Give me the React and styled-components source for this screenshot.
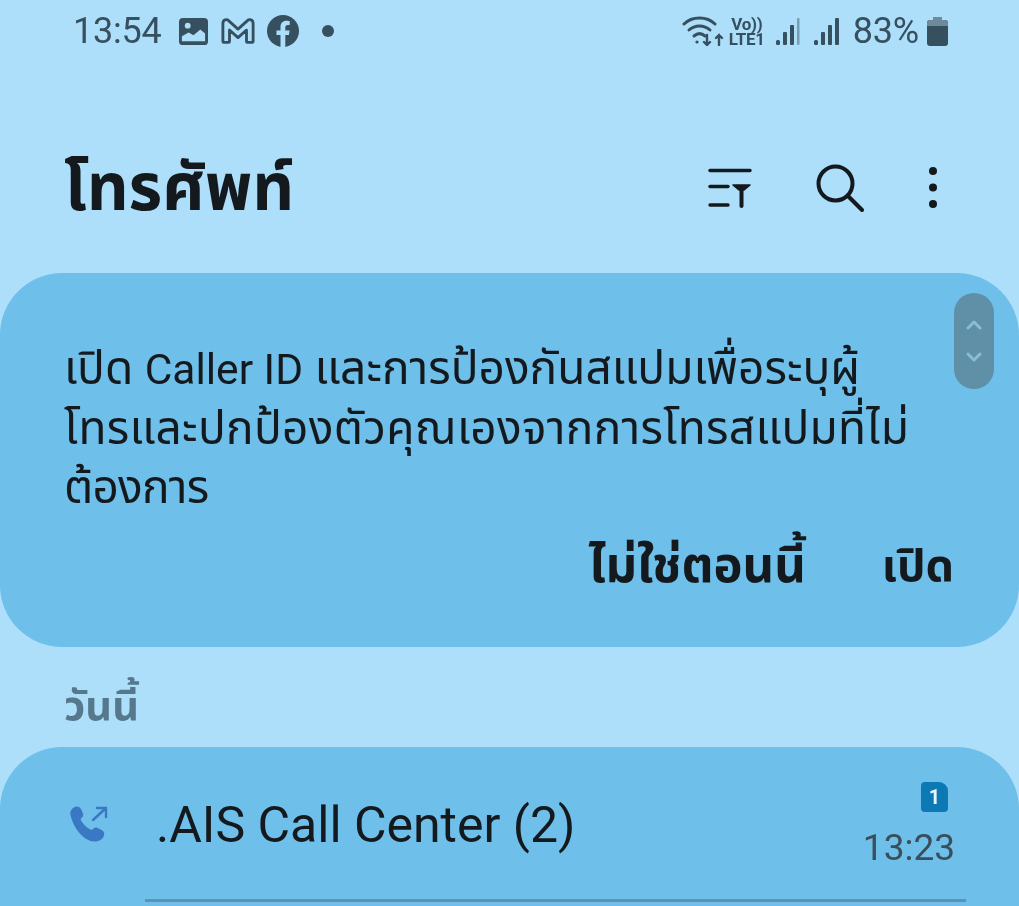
import React from "react"
import styled, { createGlobalStyle } from "styled-components"

const GlobalStyle = createGlobalStyle`
  html, body {
    margin: 0;
    padding: 0;
    background: #addffb;
    font-family: Roboto, "Noto Sans", "Noto Sans Thai", sans-serif;
  }
  body {
    height: 906px;
    overflow: hidden;
  }
`

const Page = styled.div`
  position: relative;
  width: 1019px;
  height: 906px;
  overflow: hidden;
  background: #addffb;
  filter: blur(0.7px);
`

const StatusBar = styled.div`
  display: flex;
  justify-content: space-between;
  align-items: center;
  height: 62px;
  padding: 0 71px 0 73px;
  color: #37505f;
`

const StatusGroup = styled.div`
  display: flex;
  align-items: center;
`

const StatusSlot = styled.div`
  display: flex;
  align-items: center;
  margin-left: ${(p) => p.$left || 0}px;
`

const StatusText = styled.span`
  font-size: 36px;
  line-height: 62px;
  letter-spacing: -0.2px;
`

const VoLte = styled.div`
  display: flex;
  flex-direction: column;
  align-items: center;
  font-size: 17px;
  font-weight: 700;
  line-height: 15px;
  letter-spacing: -0.3px;
  margin-top: 2px;
`

const Header = styled.div`
  display: flex;
  justify-content: space-between;
  align-items: center;
  height: 170px;
  padding: 41px 81px 0 64px;
`

const Title = styled.h1`
  margin: 4px 0 0;
  font-size: 65px;
  font-weight: 700;
  color: #14191d;
`

const Actions = styled.div`
  display: flex;
  align-items: center;
  gap: 64px;
`

const Banner = styled.section`
  height: 374px;
  box-sizing: border-box;
  padding: 66px 65px 0 64px;
  background: #6ebfea;
  border-radius: 62px;
  color: #14191d;
`

const BannerLine = styled.div`
  font-size: 46px;
  line-height: 59.5px;
  height: 59.5px;
  white-space: nowrap;
  letter-spacing: ${(p) => p.$tracking || 0}px;
`

const Latin = styled.span`
  font-size: 42.5px;
`

const BannerButtons = styled.div`
  display: flex;
  justify-content: flex-end;
  align-items: center;
  gap: 76px;
  margin-top: 21px;
`

const BannerButton = styled.span`
  font-size: ${(p) => p.$size || 49}px;
  font-weight: 700;
  line-height: 54px;
`

const ScrollThumb = styled.div`
  position: absolute;
  left: 954px;
  top: 293px;
  width: 40px;
  height: 96px;
  border-radius: 20px;
  background: #5f90a8;
  display: flex;
  flex-direction: column;
  align-items: center;
  justify-content: center;
  gap: 22px;
`

const SectionLabel = styled.div`
  height: 100px;
  box-sizing: border-box;
  padding: 32px 0 0 64px;
  font-size: 41.5px;
  font-weight: 700;
  line-height: 54px;
  color: #56788c;
`

const CallCard = styled.section`
  height: 200px;
  background: #6ebfea;
  border-radius: 62px 62px 0 0;
`

const CallRow = styled.div`
  display: flex;
  align-items: center;
  height: 152px;
  box-sizing: border-box;
  padding: 0 64px 0 69px;
`

const CallIcon = styled.div`
  width: 87px;
  display: flex;
  align-items: center;
  margin-top: 5px;
`

const CallName = styled.div`
  flex: 1;
  font-size: 50px;
  line-height: 56px;
  color: #14191d;
  margin-top: 4px;
`

const CallMeta = styled.div`
  display: flex;
  flex-direction: column;
  align-items: flex-end;
  gap: 16px;
  margin-top: 3px;
`

const SimBadge = styled.div`
  width: 27px;
  height: 30px;
  margin-right: 7px;
  border-radius: 4px 9px 4px 4px;
  background: #0c78b4;
  color: #e8f4fb;
  font-size: 20px;
  font-weight: 700;
  line-height: 30px;
  text-align: center;
`

const CallTime = styled.div`
  font-size: 37px;
  line-height: 40px;
  color: #3a4e5c;
`

const Divider = styled.div`
  height: 3px;
  margin: 0 53px 0 145px;
  background: #5b93b5;
`

const GalleryIcon = () => (
  <svg width="31" height="29" viewBox="0 0 32 30">
    <rect x="1" y="1" width="30" height="28" rx="4" fill="#37505f" />
    <circle cx="10" cy="9" r="3" fill="#addffb" />
    <path d="M4 25v-5l7-4 5 3 7-6 5 4v8z" fill="#addffb" />
  </svg>
)

const GmailIcon = () => (
  <svg width="34" height="28" viewBox="0 0 36 28" fill="none" stroke="#37505f" strokeWidth="3" strokeLinejoin="round">
    <path d="M2 6c0-4 4-5 6-3l10 9 10-9c2-2 6-1 6 3v19a1 1 0 0 1-1 1h-5a1 1 0 0 1-1-1V13l-9 8-9-8v12a1 1 0 0 1-1 1H3a1 1 0 0 1-1-1z" />
  </svg>
)

const FacebookIcon = () => (
  <svg width="32" height="32" viewBox="0 0 32 32">
    <circle cx="16" cy="16" r="16" fill="#37505f" />
    <path
      d="M13.5 32V20H9.500v-4.600h4v-3.400c0-4 2.400-6.200 6-6.200 1.700 0 3.200.3 3.200.3v3.900h-1.800c-2 0-2.600 1.200-2.600 2.500v2.900h4.300l-.7 4.600h-3.600v12z"
      fill="#addffb"
    />
  </svg>
)

const Dot = () => (
  <svg width="12" height="12" viewBox="0 0 12 12">
    <circle cx="6" cy="6" r="6" fill="#37505f" />
  </svg>
)

const WifiIcon = () => (
  <svg width="42" height="30" viewBox="0 0 42 30" fill="none" stroke="#37505f" strokeWidth="3" strokeLinecap="round">
    <path d="M2 8C10 0 25 0 33 8" />
    <path d="M7 14c6-5.500 15-5.500 21 0" />
    <path d="M12 20c3.500-3 7.500-3 11 0" />
    <circle cx="15" cy="26" r="1.600" fill="#37505f" stroke="none" />
    <path d="M25 19v10M22 26l3 3 3-3" strokeWidth="2.400" />
    <path d="M37 29V19M34 22l3-3 3 3" strokeWidth="2.400" />
  </svg>
)

const SignalIcon = ({ faded }) => (
  <svg width="26" height="29" viewBox="0 0 26 29" fill="#37505f">
    <rect x="1" y="23" width="4" height="5" rx="1.500" />
    <rect x="8" y="15" width="4" height="13" rx="1" />
    <rect x="15" y="8" width="4" height="20" rx="1" />
    <rect x="22" y="1" width={faded ? 2.500 : 4} height="27" rx="1" opacity={faded ? 0.45 : 1} />
  </svg>
)

const BatteryIcon = () => (
  <svg width="21" height="29" viewBox="0 0 21 29">
    <rect x="6" y="0" width="9" height="4" fill="#6f8b9b" />
    <rect x="0" y="3" width="21" height="26" rx="3" fill="#37505f" />
    <path d="M0 9V6a3 3 0 0 1 3-3h15a3 3 0 0 1 3 3v3z" fill="#6f8b9b" />
  </svg>
)

const FilterIcon = () => (
  <svg width="44" height="40" viewBox="0 0 44 40" fill="none" stroke="#14191d" strokeWidth="3.400" strokeLinecap="round">
    <path d="M2 2.500h40" />
    <path d="M2 18.500h18" />
    <path d="M2 37h18" />
    <path d="M25 17h17l-6 5h-5z" fill="#14191d" strokeWidth="1.600" strokeLinejoin="round" />
    <path d="M33.500 22v16" strokeWidth="4" />
  </svg>
)

const SearchIcon = () => (
  <svg width="48" height="48" viewBox="0 0 48 48" fill="none" stroke="#14191d" strokeWidth="4" strokeLinecap="round">
    <circle cx="19.500" cy="19.500" r="17" />
    <path d="M32 32l14 14" />
  </svg>
)

const MoreIcon = () => (
  <svg width="10" height="44" viewBox="0 0 10 44" fill="#14191d">
    <circle cx="5" cy="5" r="4" />
    <circle cx="5" cy="21.500" r="4" />
    <circle cx="5" cy="38" r="4" />
  </svg>
)

const Chevron = ({ up }) => (
  <svg width="18" height="11" viewBox="0 0 18 11" fill="none" stroke="#86bdd8" strokeWidth="3" strokeLinecap="round" strokeLinejoin="round">
    <path d={up ? "M3 9l6-6 6 6" : "M3 2l6 6 6-6"} />
  </svg>
)

const OutgoingCallIcon = () => (
  <svg width="42" height="40" viewBox="0 0 42 40" fill="none">
    <path
      d="M1.500 9c-1-4 2-7.500 5.500-8.500 2.500-.5 4.500 1 5.500 3.500l1.500 3.500c.6 1.500 0 3-1 4l-1.500 1.500c1.500 4 6 9 11 11l2-1.500c1-1 2.500-1.200 4-.5l4 2c2.500 1.200 3.300 3.500 2.500 5.500-1 3.500-4.500 6-9 6C16 36 4.500 23 1.500 9z"
      fill="#3a78c4"
    />
    <path d="M24 14L37 2M28 2h9v9" stroke="#3a78c4" strokeWidth="2.400" strokeLinecap="round" strokeLinejoin="round" />
  </svg>
)

const App = () => {
  return (
    <Page>
      <GlobalStyle />
      <StatusBar>
        <StatusGroup>
          <StatusText>13:54</StatusText>
          <StatusSlot $left={16}>
            <GalleryIcon />
          </StatusSlot>
          <StatusSlot $left={12}>
            <GmailIcon />
          </StatusSlot>
          <StatusSlot $left={12}>
            <FacebookIcon />
          </StatusSlot>
          <StatusSlot $left={23}>
            <Dot />
          </StatusSlot>
        </StatusGroup>
        <StatusGroup>
          <WifiIcon />
          <StatusSlot $left={5}>
            <VoLte>
              <span>Vo))</span>
              <span>LTE1</span>
            </VoLte>
          </StatusSlot>
          <StatusSlot $left={10}>
            <SignalIcon faded />
          </StatusSlot>
          <StatusSlot $left={12}>
            <SignalIcon />
          </StatusSlot>
          <StatusSlot $left={14}>
            <StatusText>83%</StatusText>
          </StatusSlot>
          <StatusSlot $left={8}>
            <BatteryIcon />
          </StatusSlot>
        </StatusGroup>
      </StatusBar>

      <Header>
        <Title>โทรศัพท์</Title>
        <Actions>
          <FilterIcon />
          <SearchIcon />
          <MoreIcon />
        </Actions>
      </Header>

      <Banner>
        <BannerLine>
          เปิด <Latin>Caller ID</Latin> และการป้องกันสแปมเพื่อระบุผู้
        </BannerLine>
        <BannerLine $tracking={0.3}>โทรและปกป้องตัวคุณเองจากการโทรสแปมที่ไม่</BannerLine>
        <BannerLine $tracking={-0.8}>ต้องการ</BannerLine>
        <BannerButtons>
          <BannerButton>ไม่ใช่ตอนนี้</BannerButton>
          <BannerButton $size={45}>เปิด</BannerButton>
        </BannerButtons>
      </Banner>

      <ScrollThumb>
        <Chevron up />
        <Chevron />
      </ScrollThumb>

      <SectionLabel>วันนี้</SectionLabel>

      <CallCard>
        <CallRow>
          <CallIcon>
            <OutgoingCallIcon />
          </CallIcon>
          <CallName>.AIS Call Center (2)</CallName>
          <CallMeta>
            <SimBadge>1</SimBadge>
            <CallTime>13:23</CallTime>
          </CallMeta>
        </CallRow>
        <Divider />
      </CallCard>
    </Page>
  )
}

export default App
